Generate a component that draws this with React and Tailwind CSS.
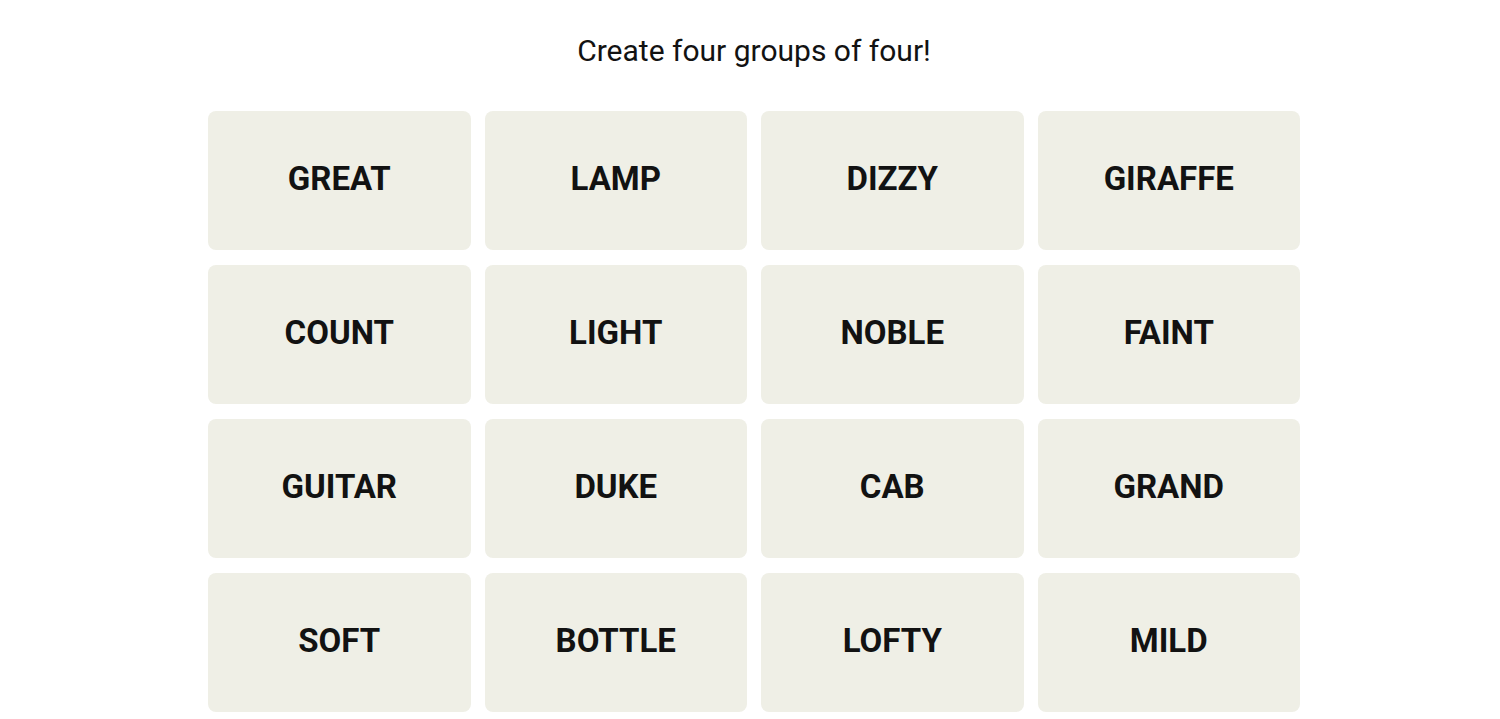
import React from 'react';

const words = [
  'GREAT', 'LAMP', 'DIZZY', 'GIRAFFE',
  'COUNT', 'LIGHT', 'NOBLE', 'FAINT',
  'GUITAR', 'DUKE', 'CAB', 'GRAND',
  'SOFT', 'BOTTLE', 'LOFTY', 'MILD',
];

const App = () => {
  return (
    <div className="min-h-screen bg-white font-['Roboto',sans-serif] text-[#121212]">
      <div className="flex flex-col items-center pl-[8px]">
        <h1 className="mt-[31px] text-[30px] leading-[40px] font-normal">
          Create four groups of four!
        </h1>
        <div className="mt-[40px] grid w-[1092px] grid-cols-4 gap-x-[14px] gap-y-[15px]">
          {words.map(word => (
            <button
              key={word}
              className="flex h-[139px] items-center justify-center rounded-lg bg-[#efefe6] pb-[4px] text-[33px] font-bold leading-none"
            >
              {word}
            </button>
          ))}
        </div>
      </div>
    </div>
  );
};

export default App;
